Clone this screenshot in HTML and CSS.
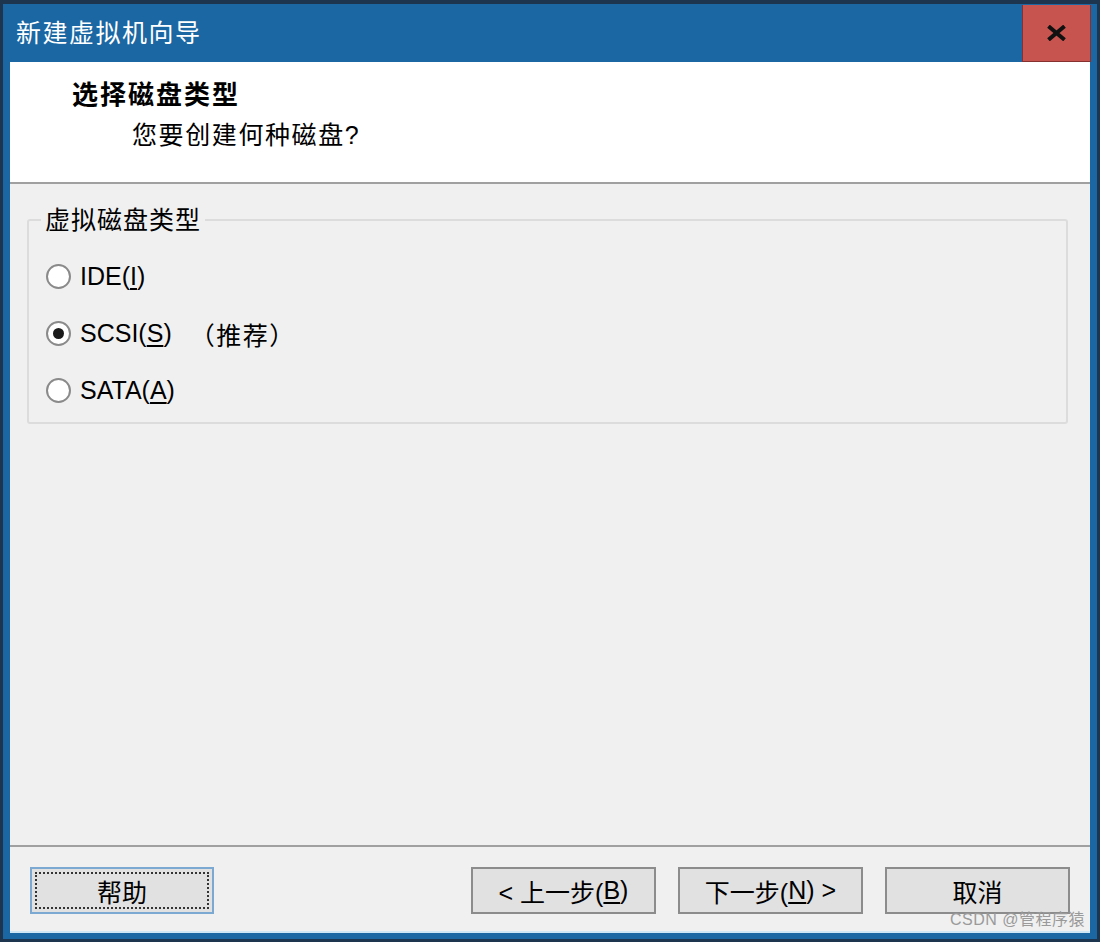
FILE: index.html
```html
<!DOCTYPE html>
<html lang="zh-CN">
<head>
<meta charset="utf-8">
<title>新建虚拟机向导</title>
<link rel="stylesheet" href="styles.css">
</head>
<body>
<div class="win">
  <div class="titlebar">
    <div class="title">新建虚拟机向导</div>
    <div class="close">
      <svg width="19" height="16" viewBox="0 0 19 16"><path d="M3 2.5 L16 13.5 M16 2.5 L3 13.5" stroke="#111" stroke-width="4" stroke-linecap="square"/></svg>
    </div>
  </div>
  <div class="client">
    <div class="header">
      <div class="h-title">选择磁盘类型</div>
      <div class="h-sub">您要创建何种磁盘?</div>
    </div>
    <div class="main">
      <fieldset class="group">
        <legend>虚拟磁盘类型</legend>
        <div class="opt"><span class="radio"></span><span class="lbl">IDE(<u>I</u>)</span></div>
        <div class="opt"><span class="radio checked"></span><span class="lbl">SCSI(<u>S</u>)</span><span class="rec">（推荐）</span></div>
        <div class="opt"><span class="radio"></span><span class="lbl">SATA(<u>A</u>)</span></div>
      </fieldset>
    </div>
    <div class="footer">
      <div class="btn help"><span class="focus">帮助</span></div>
      <div class="spacer"></div>
      <div class="btn">&lt; 上一步(<u>B</u>)</div>
      <div class="btn">下一步(<u>N</u>) &gt;</div>
      <div class="btn">取消</div>
    </div>
    <div class="watermark">CSDN @管程序猿</div>
  </div>
</div>
</body>
</html>
```

FILE: styles.css
```css
* { box-sizing: border-box; }
html, body { margin: 0; padding: 0; }
body {
  width: 1100px;
  height: 942px;
  font-family: "Liberation Sans", "Noto Sans CJK SC", sans-serif;
  font-size: 25px;
  color: #000;
  background: #fff;
}
.win {
  width: 1100px;
  height: 942px;
  background: #1b67a4;
  border: 3px solid #1e3550;
  border-top-width: 4px;
  padding: 0 7px 6px 7px;
  display: flex;
  flex-direction: column;
}
.titlebar {
  height: 58px;
  display: flex;
  align-items: flex-start;
  justify-content: space-between;
  flex: none;
}
.title {
  color: #fff;
  line-height: 58px;
  padding-left: 6px;
  letter-spacing: 1.5px;
}
.close {
  width: 69px;
  height: 57px;
  margin-top: 1px;
  margin-right: -1px;
  background: #c8544f;
  border: 1px solid #86302f;
  border-top: none;
  display: flex;
  align-items: center;
  justify-content: center;
}
.client {
  flex: 1;
  position: relative;
  background: #f0f0f0;
  border-bottom: 2px solid #cfe6f5;
  display: flex;
  flex-direction: column;
}
.header {
  background: #fff;
  height: 122px;
  border-bottom: 2px solid #a0a0a0;
  padding: 19px 0 0 62px;
  flex: none;
}
.h-title {
  font-weight: bold;
  font-size: 26px;
  letter-spacing: 2px;
  line-height: 28px;
}
.h-sub {
  line-height: 28px;
  margin-top: 12px;
  padding-left: 60px;
  letter-spacing: 1.6px;
}
.main {
  flex: 1;
  padding: 22px 22px 0 17px;
}
.group {
  margin: 0;
  border: 2px solid #dcdcdc;
  border-radius: 3px;
  padding: 14px 0 3px 14px;
  min-width: 0;
}
.group legend {
  padding: 0 4px;
  line-height: 28px;
  margin-left: -2px;
  letter-spacing: 1px;
}
.opt {
  height: 57px;
  display: flex;
  align-items: center;
  padding-left: 3px;
}
.radio {
  width: 25px;
  height: 25px;
  border-radius: 50%;
  border: 2px solid #8a8a8a;
  background: #fff;
  margin-right: 9px;
  display: flex;
  align-items: center;
  justify-content: center;
  flex: none;
}
.radio.checked::after {
  content: "";
  width: 11px;
  height: 11px;
  border-radius: 50%;
  background: #1a1a1a;
}
.lbl u, .btn u { text-decoration-thickness: 2px; text-underline-offset: 3px; }
.rec { margin-left: 18px; letter-spacing: 1.5px; }
.footer {
  flex: none;
  height: 86px;
  border-top: 2px solid #a0a0a0;
  padding: 20px 20px 0 20px;
  display: flex;
  align-items: flex-start;
  gap: 22px;
}
.spacer { flex: 1; }
.btn {
  width: 185px;
  height: 47px;
  background: #e1e1e1;
  border: 2px solid #8c8c8c;
  display: flex;
  align-items: center;
  justify-content: center;
  white-space: pre;
}
.btn.help {
  width: 184px;
  border-color: #7ca9d2;
  padding: 3px;
}
.btn.help .focus {
  width: 100%;
  height: 100%;
  border: 2px dotted #333;
  display: flex;
  align-items: center;
  justify-content: center;
}
.watermark {
  position: absolute;
  right: 5px;
  bottom: 1px;
  font-size: 16px;
  color: #9a9a9a;
  letter-spacing: 0.5px;
}
```
